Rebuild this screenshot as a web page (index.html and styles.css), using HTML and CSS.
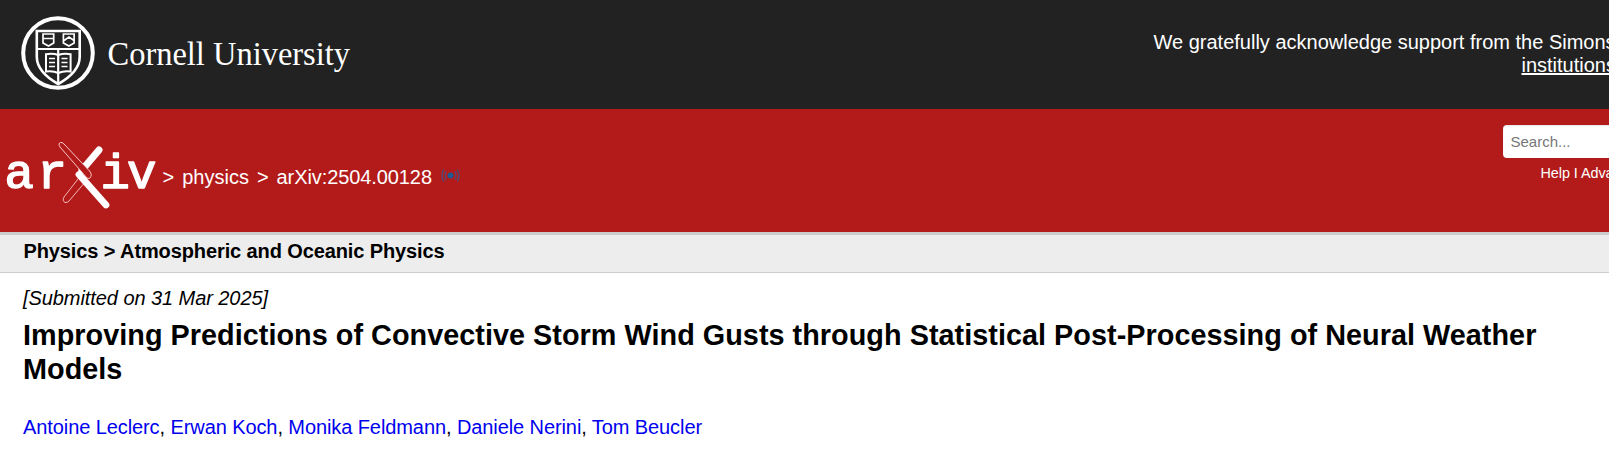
FILE: index.html
```html
<!DOCTYPE html>
<html lang="en">
<head>
<meta charset="utf-8">
<title>Improving Predictions of Convective Storm Wind Gusts</title>
<link rel="stylesheet" href="styles.css">
</head>
<body>
<header class="university">
  <svg class="cornell" width="350" height="80" viewBox="15 10 350 80" role="img" aria-label="Cornell University">
    <circle cx="58" cy="53" r="34.8" fill="none" stroke="#fff" stroke-width="4"/>
    <g fill="none" stroke="#fff">
      <path d="M36.8 31H79.7V57Q79.5 72 58.2 84Q37 72 36.8 57Z" stroke-width="2.6"/>
      <path d="M37 49H79M58.2 49V84" stroke-width="2.2"/>
      <path d="M43 34H53.7V43L48.5 46L43 43ZM43 38.5H53.5M63.4 34H74.1V43L68.9 46L63.4 43ZM64 40.5L69 37L74 40.5" stroke-width="1.7"/>
      <path d="M46 54.2Q53 53 58.2 55Q64 53 70.6 54.2V71.5Q64 70.5 58.2 73Q53 70.5 46 71.5Z" stroke-width="2"/>
      <path d="M49 58.5H55M49 62.5H55M49 66.5H55M61.5 58.5H67.5M61.5 62.5H67.5M61.5 66.5H67.5" stroke-width="1.4"/>
    </g>
    <text class="wordmark" x="107.5" y="64.5" textLength="242.5" lengthAdjust="spacingAndGlyphs">Cornell University</text>
  </svg>
  <p class="support">We gratefully acknowledge support from the Simons<br><a class="member" href="#">institutions</a></p>
</header>
<div class="banner">
  <div class="identity">
    <svg class="arxiv" width="158" height="72" viewBox="0 140 158 72" role="img" aria-label="arXiv">
      <g class="arxiv-letters">
        <text x="4.5" y="188.3">a</text>
        <text x="37.5" y="188.3">r</text>
        <text x="100.5" y="188.3">i</text>
        <text x="127" y="188.3">v</text>
      </g>
      <path d="M99 150L82 170" stroke="#fff" stroke-width="7" stroke-linecap="round"/>
      <path d="M78 179L64 197Q62 201 65 202.5Q67 203 69 201L86 181" fill="#b31b1b" stroke="#f3b5b5" stroke-width="1"/>
      <path d="M59.2 145.5Q58.5 142 62 142.5L64 144L89.5 171Q93 175 89.5 178.5L87 178L60 147Z" fill="#b31b1b" stroke="#f6c6c6" stroke-width="1"/>
      <path d="M79 174.5L106 205" stroke="#fff" stroke-width="6.8" stroke-linecap="round"/>
    </svg>
    <div class="crumbs"><span class="c1">&gt;</span><span class="c2">physics</span><span class="c3">&gt;</span><span class="c4">arXiv:2504.00128</span>
      <svg class="signal" width="19" height="15" viewBox="0 0 20 16"><circle cx="10" cy="8" r="3.2" fill="#1f5b91"/><path d="M5.3 3.5Q2.8 8 5.3 12.5M14.7 3.5Q17.2 8 14.7 12.5M2.7 1.5Q-.8 8 2.7 14.5M17.3 1.5Q20.8 8 17.3 14.5" fill="none" stroke="#564a73" stroke-width="1.5"/></svg>
    </div>
  </div>
  <div class="search">
    <input class="query" type="text" placeholder="Search..." aria-label="Search">
    <p class="help">Help I Adva</p>
  </div>
</div>
<h1 class="subject">Physics &gt; Atmospheric and Oceanic Physics</h1>
<main class="paper">
  <p class="dateline">[Submitted on 31 Mar 2025]</p>
  <h2 class="title">Improving Predictions of Convective Storm Wind Gusts through Statistical Post-Processing of Neural Weather<br>Models</h2>
  <p class="authors"><a href="#">Antoine Leclerc</a>, <a href="#">Erwan Koch</a>, <a href="#">Monika Feldmann</a>, <a href="#">Daniele Nerini</a>, <a href="#">Tom Beucler</a></p>
</main>
</body>
</html>
```
FILE: styles.css
```css
* { box-sizing: border-box; }
body { margin: 0; overflow: hidden; background: #fff; color: #000; font: 20px/23px "Liberation Sans", Arial, sans-serif; }
p, h1, h2 { margin: 0; }
svg { display: block; flex: none; }
.university { height: 109px; display: flex; background: #222; color: #fff; padding: 10px 0 0 15px; overflow: hidden; }
.wordmark { font: 34px "Liberation Serif", serif; fill: #fff; }
.support { margin: 21px 0 0 788.5px; white-space: nowrap; }
.member { margin-left: 368px; color: #fff; }
.banner { height: 123px; display: flex; background: #b31b1b; color: #fff; overflow: hidden; }
.identity { display: flex; flex: none; width: 1503px; padding-top: 31px; }
.arxiv-letters { font: 49px "Liberation Mono", monospace; fill: #fff; stroke: #fff; stroke-width: 1.5px; stroke-linejoin: round; }
.crumbs { display: flex; padding: 26px 0 0 4.5px; white-space: nowrap; }
.c2, .c3 { margin-left: 8px; }
.c4 { margin-left: 8px; letter-spacing: -.09px; }
.signal { margin: 2px 0 0 9px; }
.search { flex: none; padding-top: 16px; }
.query { display: block; width: 260px; height: 33px; border: 0; border-radius: 4px; padding: 0 7.5px; background: #fff; box-shadow: inset 0 1px 2px rgba(10,10,10,.1); font: 15px "Liberation Sans", sans-serif; }
.query::placeholder { color: #777; opacity: 1; }
.help { margin: 4px 0 0 37.5px; font-size: 14.4px; letter-spacing: -.05px; white-space: nowrap; }
.subject { height: 41px; border-top: 3px solid #ccc; border-bottom: 1px solid #ccc; background: #ededed; padding: 5px 23.5px; font-size: 20px; line-height: 23px; letter-spacing: -.11px; }
.paper { padding: 14px 23px; white-space: nowrap; }
.dateline { font-style: italic; letter-spacing: -.07px; }
.title { font-size: 28.8px; line-height: 34px; margin-top: 8px; letter-spacing: .035px; }
.authors { margin-top: 30px; letter-spacing: -.09px; }
.authors a { color: #00e; text-decoration: none; }
```
